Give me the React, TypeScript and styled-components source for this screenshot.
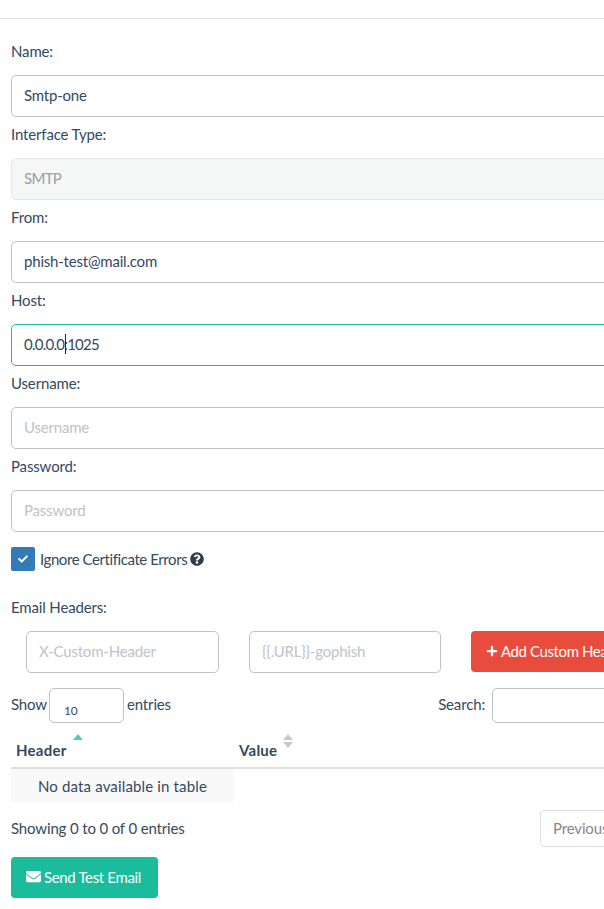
import React from 'react'
import styled, {createGlobalStyle} from 'styled-components'
import {FaCheck, FaEnvelope, FaPlus, FaQuestionCircle} from 'react-icons/fa'

const GlobalStyle = createGlobalStyle`
  html, body {
    margin: 0;
    height: 909px;
    overflow: hidden;
    background: #fff;
  }
  body {
    font-family: "Lato", "Open Sans", sans-serif;
    font-size: 15px;
    letter-spacing: -0.15px;
    color: #34495e;
  }
  input, select, button {
    font-family: inherit;
    letter-spacing: inherit;
  }
`

const Page = styled.div`
  width: 860px;
`

const TopBar = styled.div`
  height: 18px;
  border-bottom: 1px solid #e5e5e5;
`

const Form = styled.form`
  padding: 15px 11px 0;
  width: 700px;
`

const Label = styled.label`
  display: block;
  line-height: 21px;
  padding: 7px 0 13px;
`

const FieldWrap = styled.div`
  position: relative;
`

const TextInput = styled.input<{$focused?: boolean; $spacing?: number}>`
  display: block;
  box-sizing: border-box;
  width: 100%;
  height: 42px;
  padding: 0 12px 2px;
  font-size: 15px;
  letter-spacing: ${p => (p.$spacing !== undefined ? p.$spacing : -0.2)}px;
  color: #34495e;
  background: #fff;
  border: 1px solid ${p => (p.$focused ? '#1abc9c' : '#bdc3c7')};
  border-radius: 5px;
  outline: none;
  &::placeholder {
    color: #bdc3c7;
    opacity: 1;
  }
  &:disabled {
    background: #f5f7f7;
    border-color: #e4e7e8;
    color: #9a9f9f;
  }
`

const Caret = styled.span`
  position: absolute;
  left: 54px;
  top: 10px;
  width: 1px;
  height: 20px;
  background: #1d2b3a;
`

const CheckRow = styled.div`
  display: flex;
  align-items: center;
  margin-top: 15px;
  height: 24px;
  letter-spacing: -0.42px;
`

const CheckBox = styled.span`
  display: flex;
  align-items: center;
  justify-content: center;
  width: 24px;
  height: 24px;
  background: #337ab7;
  border-radius: 2px;
  color: #fff;
  font-size: 10px;
  margin-right: 5px;
`

const HelpIcon = styled(FaQuestionCircle)`
  margin-left: 3px;
  font-size: 14px;
  color: #2c3e50;
`

const SectionLabel = styled.div`
  margin-top: 26px;
  line-height: 21px;
`

const HeaderRow = styled.div`
  display: flex;
  margin-top: 13px;
  padding-left: 15px;
`

const HeaderInput = styled(TextInput)<{$w: number}>`
  width: ${p => p.$w}px;
  margin-right: 30px;
`

const DangerButton = styled.button`
  display: flex;
  align-items: center;
  gap: 3px;
  box-sizing: border-box;
  height: 41px;
  padding: 0 15px 2px;
  color: #fff;
  background: #e74c3c;
  border: none;
  border-radius: 4px;
  font-size: 15px;
  letter-spacing: -0.4px;
  white-space: nowrap;
  svg {
    flex-shrink: 0;
  }
`

const TableControls = styled.div`
  display: flex;
  align-items: flex-start;
  justify-content: space-between;
  margin-top: 15px;
  height: 35px;
  line-height: 33px;
`

const ControlGroup = styled.div`
  display: flex;
  align-items: flex-start;
  gap: 2px;
`

const LengthSelect = styled.select`
  box-sizing: border-box;
  width: 75px;
  height: 35px;
  margin-right: 1px;
  padding: 9px 0 0 14px;
  font-size: 12px;
  color: #34495e;
  background: #fff;
  border: 1px solid #bdc3c7;
  border-radius: 5px;
  appearance: none;
  outline: none;
`

const SearchBox = styled.input`
  box-sizing: border-box;
  width: 219px;
  height: 35px;
  margin-left: 5px;
  background: #fff;
  border: 1px solid #bdc3c7;
  border-radius: 5px;
  outline: none;
`

const DataTable = styled.table`
  width: 100%;
  margin-top: 9px;
  border-collapse: collapse;
  table-layout: fixed;
`

const HeadCell = styled.th<{$w?: number}>`
  width: ${p => (p.$w ? `${p.$w}px` : 'auto')};
  box-sizing: border-box;
  height: 36px;
  padding: 0 5px;
  text-align: left;
  font-size: 15px;
  font-weight: 700;
  border-bottom: 2px solid #ddd;
`

const HeadInner = styled.span`
  position: relative;
  display: inline-block;
  letter-spacing: 0.25px;
`

const SortArrow = styled.span<{$dir: 'up' | 'down'; $color: string; $left: number}>`
  position: absolute;
  left: ${p => p.$left}px;
  top: ${p => (p.$dir === 'up' ? -7 : 1)}px;
  width: 0;
  height: 0;
  border-left: 5px solid transparent;
  border-right: 5px solid transparent;
  ${p =>
    p.$dir === 'up'
      ? `border-bottom: 6px solid ${p.$color};`
      : `border-top: 6px solid ${p.$color};`}
`

const EmptyCell = styled.td`
  height: 33px;
  padding: 0;
  text-align: center;
  letter-spacing: 0.15px;
  background: #f9f9f9;
`

const TableFooter = styled.div`
  display: flex;
  align-items: flex-start;
  justify-content: space-between;
  margin-top: 8px;
  height: 37px;
  line-height: 36px;
`

const Pager = styled.div`
  display: flex;
  width: 171px;
`

const PageButton = styled.button`
  box-sizing: border-box;
  height: 37px;
  padding: 0 12px 2px;
  font-size: 15px;
  color: #888;
  background: #fff;
  border: 1px solid #ddd;
  border-radius: 4px;
`

const PrimaryButton = styled.button`
  display: flex;
  align-items: center;
  gap: 3px;
  box-sizing: border-box;
  height: 41px;
  width: 147px;
  margin-top: 10px;
  padding: 0 15px 2px;
  color: #fff;
  background: #1abc9c;
  border: none;
  border-radius: 4px;
  font-size: 15px;
  letter-spacing: -0.35px;
  white-space: nowrap;
  svg {
    flex-shrink: 0;
  }
`

const App: React.FC = () => {
  return (
    <Page>
      <GlobalStyle />
      <TopBar />
      <Form>
        <Label>Name:</Label>
        <TextInput defaultValue="Smtp-one" />
        <Label>Interface Type:</Label>
        <TextInput defaultValue="SMTP" $spacing={-0.7} disabled />
        <Label>From:</Label>
        <TextInput defaultValue="phish-test@mail.com" />
        <Label>Host:</Label>
        <FieldWrap>
          <TextInput $focused $spacing={-0.75} defaultValue="0.0.0.0:1025" />
          <Caret />
        </FieldWrap>
        <Label>Username:</Label>
        <TextInput placeholder="Username" />
        <Label>Password:</Label>
        <TextInput placeholder="Password" />
        <CheckRow>
          <CheckBox>
            <FaCheck />
          </CheckBox>
          Ignore Certificate Errors
          <HelpIcon />
        </CheckRow>
        <SectionLabel>Email Headers:</SectionLabel>
        <HeaderRow>
          <HeaderInput $w={193} placeholder="X-Custom-Header" />
          <HeaderInput $w={192} placeholder="{{.URL}}-gophish" />
          <DangerButton type="button">
            <FaPlus size={12} />
            Add Custom Header
          </DangerButton>
        </HeaderRow>
        <TableControls>
          <ControlGroup>
            Show
            <LengthSelect defaultValue="10">
              <option>10</option>
            </LengthSelect>
            entries
          </ControlGroup>
          <ControlGroup>
            Search:
            <SearchBox />
          </ControlGroup>
        </TableControls>
        <DataTable>
          <thead>
            <tr>
              <HeadCell $w={223}>
                <HeadInner>
                  Header
                  <SortArrow $dir="up" $color="#4fcdb4" $left={57} />
                </HeadInner>
              </HeadCell>
              <HeadCell>
                <HeadInner>
                  Value
                  <SortArrow $dir="up" $color="#c8c8c8" $left={44} />
                  <SortArrow $dir="down" $color="#c8c8c8" $left={44} />
                </HeadInner>
              </HeadCell>
            </tr>
          </thead>
          <tbody>
            <tr>
              <EmptyCell>No data available in table</EmptyCell>
              <td />
            </tr>
          </tbody>
        </DataTable>
        <TableFooter>
          <span>Showing 0 to 0 of 0 entries</span>
          <Pager>
            <PageButton type="button">Previous</PageButton>
          </Pager>
        </TableFooter>
        <PrimaryButton type="button">
          <FaEnvelope size={15} />
          Send Test Email
        </PrimaryButton>
      </Form>
    </Page>
  )
}

export default App
